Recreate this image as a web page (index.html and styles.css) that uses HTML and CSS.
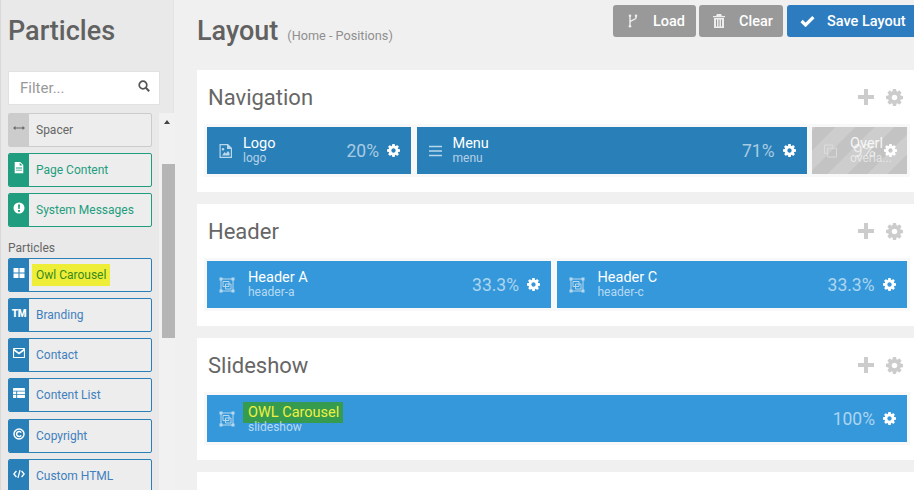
FILE: index.html
```html
<!DOCTYPE html>
<html lang="en">
<head>
    <meta charset="UTF-8">
    <meta name="viewport" content="width=device-width, initial-scale=1.0">
    <title>Layout Manager</title>
    <link rel="stylesheet" href="styles.css">
</head>
<body>
    <!-- shared icons -->
    <svg class="icon-defs" width="0" height="0">
        <symbol id="cog" viewBox="0 0 1536 1536">
            <path fill-rule="evenodd" d="M1024 768q0-106-75-181t-181-75-181 75-75 181 75 181 181 75 181-75 75-181zm512-109v222q0 12-8 23t-20 13l-185 28q-19 54-39 91 35 50 107 138 10 12 10 25t-9 23q-27 37-99 108t-94 71q-12 0-26-9l-138-108q-44 23-91 38-16 136-29 186-7 28-36 28h-222q-14 0-24.500-8.500t-11.500-21.500l-28-184q-49-16-90-37l-141 107q-10 9-25 9-14 0-25-11-126-114-165-168-7-10-7-23 0-12 8-23 15-21 51-66.500t54-70.500q-27-50-41-99l-183-27q-13-2-21-12.500t-8-23.500v-222q0-12 8-23t19-13l186-28q14-46 39-92-40-57-107-138-10-12-10-24 0-10 9-23 26-36 98.500-107.500t94.500-71.500q13 0 26 10l138 107q44-23 91-38 16-136 29-186 7-28 36-28h222q14 0 24.500 8.500t11.500 21.500l28 184q49 16 90 37l142-107q9-9 24-9 13 0 25 10 129 119 165 170 7 8 7 22 0 12-8 23-15 21-51 66.500t-54 70.500q26 50 41 98l183 28q13 2 21 12.500t8 23.500z"/>
        </symbol>
        <symbol id="position" viewBox="0 0 16 16">
            <path fill="none" stroke="currentColor" d="M2 2h12v12H2zM4 4.500h6v5H4zM6.500 7h5.500v5H6.500z"/>
            <path fill="currentColor" d="M.5 .5h3v3h-3zM12.500 .5h3v3h-3zM.5 12.500h3v3h-3zM12.500 12.500h3v3h-3z"/>
        </symbol>
    </svg>

    <aside class="sidebar">
        <h1 class="sidebar-title">Particles</h1>
        <div class="filter">
            <span>Filter...</span>
            <svg class="filter-icon" viewBox="0 0 12 12"><circle cx="5" cy="5" r="3.800" fill="none" stroke="currentColor" stroke-width="1.700"/><path d="M7.800 7.800L11.200 11.200" stroke="currentColor" stroke-width="2"/></svg>
        </div>
        <div class="particle-wrap">
            <div class="particle-list">
                <div class="particle spacer">
                    <span class="particle-icon"><svg viewBox="0 0 12 12"><path d="M0 6l2.500-2v1.400h7V4L12 6 9.500 8V6.600h-7V8z" fill="currentColor"/></svg></span>
                    <span class="particle-name">Spacer</span>
                </div>
                <div class="particle green">
                    <span class="particle-icon"><svg viewBox="0 0 12 14"><path fill-rule="evenodd" d="M1 0h6.500L11 3.500V13H1zM2.500 6.500v1h7v-1zM2.500 9v1h7V9zM6.800 1v3.200H10z" fill="currentColor"/></svg></span>
                    <span class="particle-name">Page Content</span>
                </div>
                <div class="particle green">
                    <span class="particle-icon"><svg viewBox="0 0 12 12"><path fill-rule="evenodd" d="M6 .5a5.500 5.500 0 1 0 0 11 5.500 5.500 0 0 0 0-11zM5 2.500h2L6.700 7H5.300zM5 8h2v1.700H5z" fill="currentColor"/></svg></span>
                    <span class="particle-name">System Messages</span>
                </div>
                <div class="particle-label">Particles</div>
                <div class="particle">
                    <span class="particle-icon"><svg viewBox="0 0 12 12"><path d="M.5 1h5v4.500h-5zM6.500 1h5v4.500h-5zM.5 6.500h5V11h-5zM6.500 6.500h5V11h-5z" fill="currentColor"/></svg></span>
                    <span class="particle-name"><span class="hl-yellow">Owl Carousel</span></span>
                </div>
                <div class="particle">
                    <span class="particle-icon"><span class="tm">TM</span></span>
                    <span class="particle-name">Branding</span>
                </div>
                <div class="particle">
                    <span class="particle-icon"><svg viewBox="0 0 13 11"><path fill-rule="evenodd" d="M1 0h11a1 1 0 0 1 1 1v9a1 1 0 0 1-1 1H1a1 1 0 0 1-1-1V1a1 1 0 0 1 1-1zM1.200 3.200V9.800h10.600V3.200L6.500 7zM1.600 1.200L6.500 5l4.900-3.800z" fill="currentColor"/></svg></span>
                    <span class="particle-name">Contact</span>
                </div>
                <div class="particle">
                    <span class="particle-icon"><svg viewBox="0 0 13 11"><path d="M0 1a1 1 0 0 1 1-1h11a1 1 0 0 1 1 1v2H0zM0 4h3.500v2.500H0zM4.500 4H13v2.500H4.500zM0 7.500h3.500V11H1a1 1 0 0 1-1-1zM4.500 7.500H13V10a1 1 0 0 1-1 1H4.500z" fill="currentColor"/></svg></span>
                    <span class="particle-name">Content List</span>
                </div>
                <div class="particle">
                    <span class="particle-icon"><svg viewBox="0 0 12 12"><circle cx="6" cy="6" r="5" fill="none" stroke="currentColor" stroke-width="1.500"/><path d="M8.200 4.600A2.500 2.500 0 1 0 8.200 7.400" fill="none" stroke="currentColor" stroke-width="1.500"/></svg></span>
                    <span class="particle-name">Copyright</span>
                </div>
                <div class="particle">
                    <span class="particle-icon"><svg viewBox="0 0 14 10"><path d="M4 1.500L1 5l3 3.500M10 1.500L13 5l-3 3.500M8.200 .5L5.800 9.500" fill="none" stroke="currentColor" stroke-width="1.500"/></svg></span>
                    <span class="particle-name">Custom HTML</span>
                </div>
            </div>
            <div class="scrollbar">
                <span class="scroll-arrow"></span>
                <span class="scroll-thumb"></span>
            </div>
        </div>
    </aside>

    <main class="main">
        <div class="topbar">
            <div class="page-title">
                <h2>Layout</h2>
                <span class="crumb">(Home - Positions)</span>
            </div>
            <div class="actions">
                <button class="btn btn-load" type="button">
                    <svg viewBox="0 0 10 14"><path d="M2 1.500v11M8 1.500v2.500c0 2-6 2-6 4.500" fill="none" stroke="currentColor" stroke-width="1.400"/><circle cx="2" cy="1.800" r="1.300" fill="currentColor"/><circle cx="8" cy="1.800" r="1.300" fill="currentColor"/><circle cx="2" cy="12.200" r="1.300" fill="currentColor"/></svg>
                    Load
                </button>
                <button class="btn btn-clear" type="button">
                    <svg viewBox="0 0 12 14"><path fill-rule="evenodd" d="M4 0h4l1 2h3v1.200H0V2h3zM1 4h10v10H1zM3 5.500v7h1v-7zM5.500 5.500v7h1v-7zM8 5.500v7h1v-7z" fill="currentColor"/></svg>
                    Clear
                </button>
                <button class="btn btn-save" type="button">
                    <svg viewBox="0 0 14 11"><path d="M1.500 5.500l3.700 3.700L12.500 1.800" fill="none" stroke="currentColor" stroke-width="3"/></svg>
                    Save Layout
                </button>
            </div>
        </div>

        <section class="card">
            <div class="card-head">
                <h3>Navigation</h3>
                <span class="plus"></span>
                <svg class="head-cog"><use href="#cog"/></svg>
            </div>
            <div class="row">
                <div class="block dark block-logo">
                    <svg class="block-icon" viewBox="0 0 13 14"><path fill-rule="evenodd" d="M.5 0H9l4 4v10H.5zM1.700 1.200v11.600h10.100V5H8V1.200zM3 11.500L5.500 8l1.500 1.500 2-2.500 1.500 2v2.500zM4 4a1.300 1.300 0 1 1 0 2.600A1.300 1.300 0 0 1 4 4z" fill="currentColor"/></svg>
                    <div class="block-info"><div class="block-name">Logo</div><div class="block-type">logo</div></div>
                    <span class="block-size">20%</span>
                    <svg class="block-cog"><use href="#cog"/></svg>
                </div>
                <div class="block dark block-menu">
                    <svg class="block-icon" viewBox="0 0 13 14"><path d="M0 2.500h13M0 7h13M0 11.500h13" stroke="currentColor" stroke-width="1.700"/></svg>
                    <div class="block-info"><div class="block-name">Menu</div><div class="block-type">menu</div></div>
                    <span class="block-size">71%</span>
                    <svg class="block-cog"><use href="#cog"/></svg>
                </div>
                <div class="block disabled block-overlay">
                    <svg class="block-icon" viewBox="0 0 14 14"><path d="M.5 .5h9v3M4 4h9.500v9.500H4zM4 9.500H.5v-9" fill="none" stroke="currentColor"/></svg>
                    <div class="block-info"><div class="block-name">Overl</div><div class="block-type">overla...</div></div>
                    <span class="block-size">9%</span>
                    <svg class="block-cog"><use href="#cog"/></svg>
                </div>
            </div>
        </section>

        <section class="card">
            <div class="card-head">
                <h3>Header</h3>
                <span class="plus"></span>
                <svg class="head-cog"><use href="#cog"/></svg>
            </div>
            <div class="row">
                <div class="block block-header-a">
                    <svg class="block-icon block-icon-pos"><use href="#position"/></svg>
                    <div class="block-info"><div class="block-name">Header A</div><div class="block-type">header-a</div></div>
                    <span class="block-size">33.3%</span>
                    <svg class="block-cog"><use href="#cog"/></svg>
                </div>
                <div class="block block-header-c">
                    <svg class="block-icon block-icon-pos"><use href="#position"/></svg>
                    <div class="block-info"><div class="block-name">Header C</div><div class="block-type">header-c</div></div>
                    <span class="block-size">33.3%</span>
                    <svg class="block-cog"><use href="#cog"/></svg>
                </div>
            </div>
        </section>

        <section class="card">
            <div class="card-head">
                <h3>Slideshow</h3>
                <span class="plus"></span>
                <svg class="head-cog"><use href="#cog"/></svg>
            </div>
            <div class="row">
                <div class="block block-full">
                    <svg class="block-icon block-icon-pos"><use href="#position"/></svg>
                    <div class="block-info"><div class="block-name"><span class="hl-green">OWL Carousel</span></div><div class="block-type">slideshow</div></div>
                    <span class="block-size">100%</span>
                    <svg class="block-cog"><use href="#cog"/></svg>
                </div>
            </div>
        </section>

        <section class="card"></section>
    </main>
</body>
</html>
```

FILE: styles.css
```css
* {
    box-sizing: border-box;
}

html, body {
    height: 490px;
    overflow: hidden;
}

body {
    margin: 0;
    display: flex;
    font-family: 'Roboto', sans-serif;
    background-color: #f0f0f0;
    color: #666;
}

.icon-defs {
    position: absolute;
}

/* sidebar */
.sidebar {
    flex: 0 0 174px;
    min-width: 0;
    height: 490px;
    padding-left: 7px;
    background-color: #e9e9e9;
    border-left: 1px solid #d8d8d8;
    border-right: 1px solid #e3e3e3;
}

.sidebar-title {
    margin: 0;
    padding-top: 13px;
    height: 71px;
    font-size: 27px;
    line-height: 36px;
    font-weight: 500;
    color: #616161;
}

.filter {
    display: flex;
    align-items: center;
    justify-content: space-between;
    width: 152px;
    height: 34px;
    padding: 0 9px 0 11px;
    background-color: #fff;
    border: 1px solid #e2e2e2;
    font-size: 15px;
    color: #999;
}

.filter-icon {
    width: 12px;
    height: 12px;
    margin-top: -5px;
    color: #555;
}

.particle-wrap {
    display: flex;
    margin-top: 8px;
}

.particle-list {
    flex: 0 0 144px;
}

.particle {
    display: flex;
    height: 34px;
    margin-bottom: 6.200px;
    background-color: #ededed;
    border: 1px solid #2980b9;
    border-radius: 2px;
    font-size: 12px;
    color: #3f80bd;
    overflow: hidden;
}

.particle-icon {
    display: flex;
    align-items: center;
    justify-content: center;
    flex: 0 0 20px;
    padding-bottom: 4px;
    background-color: #2980b9;
    color: #fff;
}

.particle-icon svg {
    width: 12px;
    height: 12px;
}

.particle-name {
    display: flex;
    align-items: center;
    padding-left: 7px;
}

.particle.spacer {
    border-color: #ccc;
    color: #666;
}

.particle.spacer .particle-icon {
    background-color: #ccc;
    color: #666;
}

.particle.green {
    border-color: #1f9d7e;
    color: #1f9d7e;
}

.particle.green .particle-icon {
    background-color: #1f9d7e;
}

.particle-label {
    margin: 14px 0 2.500px;
    font-size: 12px;
    line-height: 14px;
    color: #666;
}

.tm {
    font-size: 10px;
    font-weight: 900;
    letter-spacing: -0.300px;
}

.hl-yellow {
    margin-left: -4px;
    padding: 4px;
    background-color: #eeee38;
    color: #3a8a1e;
}

.scrollbar {
    display: flex;
    flex: 0 0 16px;
    flex-direction: column;
    height: 377px;
    margin-left: 7px;
    padding-left: 3px;
    background-color: #f1f1f1;
}

.scroll-arrow {
    width: 0;
    height: 0;
    margin: 7px 0 0 2px;
    border-left: 3.500px solid transparent;
    border-right: 3.500px solid transparent;
    border-bottom: 4px solid #444;
}

.scroll-thumb {
    height: 174px;
    margin-top: 40px;
    background-color: #b5b5b5;
}

/* main area */
.main {
    flex: 1;
    min-width: 0;
    padding-left: 23px;
}

.topbar {
    display: flex;
    justify-content: space-between;
    height: 70px;
    padding-top: 5px;
}

.page-title {
    display: flex;
    align-items: baseline;
    padding-top: 8px;
}

.page-title h2 {
    margin: 0;
    font-size: 27px;
    line-height: 36px;
    font-weight: 500;
    color: #616161;
}

.crumb {
    margin-left: 9px;
    font-size: 12.700px;
    color: #8f8f8f;
}

.actions {
    display: flex;
    height: 32px;
}

.btn {
    display: flex;
    align-items: center;
    height: 32px;
    padding: 0 0 0 14px;
    border: none;
    border-radius: 3px;
    font-family: inherit;
    font-size: 14.500px;
    font-weight: 500;
    color: #fff;
    background-color: #999;
}

.btn svg {
    width: 12px;
    height: 14px;
    margin-right: 14px;
    color: #eee;
}

.btn-load {
    width: 83px;
    margin-right: 3px;
}

.btn-clear {
    width: 84px;
    margin-right: 4px;
}

.btn-save {
    width: 127px;
    padding-left: 13px;
    background-color: #2d7cc0;
    border-radius: 3px 0 0 3px;
}

.btn-save svg {
    width: 15px;
    height: 12px;
    margin-right: 12px;
    color: #fff;
}

.card {
    height: 122px;
    margin-bottom: 12px;
    padding: 0 4px 0 7px;
    background-color: #fff;
}

.card-head {
    display: flex;
    align-items: center;
    height: 54px;
    padding: 0 7px 0 4px;
}

.card-head h3 {
    flex: 1;
    margin: 0;
    font-size: 22px;
    font-weight: 400;
    color: #666;
}

.plus {
    width: 16px;
    height: 16px;
    margin-right: 12px;
    background:
        linear-gradient(#ccc, #ccc) center / 16px 4px no-repeat,
        linear-gradient(#ccc, #ccc) center / 4px 16px no-repeat;
}

.head-cog {
    width: 17px;
    height: 17px;
    fill: #ccc;
}

.row {
    display: flex;
    gap: 5.500px;
    height: 53px;
    padding: 3px;
    background-color: #f8f8f8;
}

.block {
    display: flex;
    align-items: center;
    height: 47px;
    padding: 0 11px 0 12px;
    background-color: #3498db;
    color: #fff;
}

.block.dark {
    background-color: #2980b9;
}

.block.disabled {
    background-color: #c6c6c6;
    background-image: repeating-linear-gradient(-45deg, #c3c3c3 0, #c3c3c3 14px, #cdcdcd 14px, #cdcdcd 28px);
}

.block-logo {
    width: 204px;
}

.block-menu {
    width: 390px;
}

.block-overlay {
    width: 95px;
}

.block-header-a {
    width: 344px;
}

.block-header-c {
    width: 350px;
}

.block-full {
    width: 700px;
}

.block-icon {
    flex: none;
    width: 13px;
    height: 14px;
    margin-right: 11px;
    color: #b8d8ee;
}

.block-icon-pos {
    width: 16px;
    height: 16px;
    margin-right: 13px;
}

.block-info {
    flex: 1;
    min-width: 0;
    line-height: 15px;
}

.block-name {
    font-size: 14.500px;
}

.block-type {
    font-size: 12px;
    line-height: 14px;
    color: rgba(255, 255, 255, 0.65);
}

.hl-green {
    display: inline-block;
    margin: -1px 0 -3px -5px;
    padding: 3px 4px 3px 5px;
    line-height: 15px;
    background-color: #359c4f;
    color: #f0f040;
}

.block-size {
    font-size: 17.500px;
    color: rgba(255, 255, 255, 0.6);
}

.block-cog {
    flex: none;
    width: 13px;
    height: 13px;
    margin-left: 8px;
    fill: #fff;
}

/* narrow overlay block: its name runs under the size */
.block-overlay .block-info {
    flex: 0 0 38px;
    margin-right: -35px;
    opacity: 0.85;
}

.block-overlay .block-icon {
    margin-right: 13px;
    color: #ddd;
}

.block-overlay .block-size {
    margin-left: auto;
}
```
